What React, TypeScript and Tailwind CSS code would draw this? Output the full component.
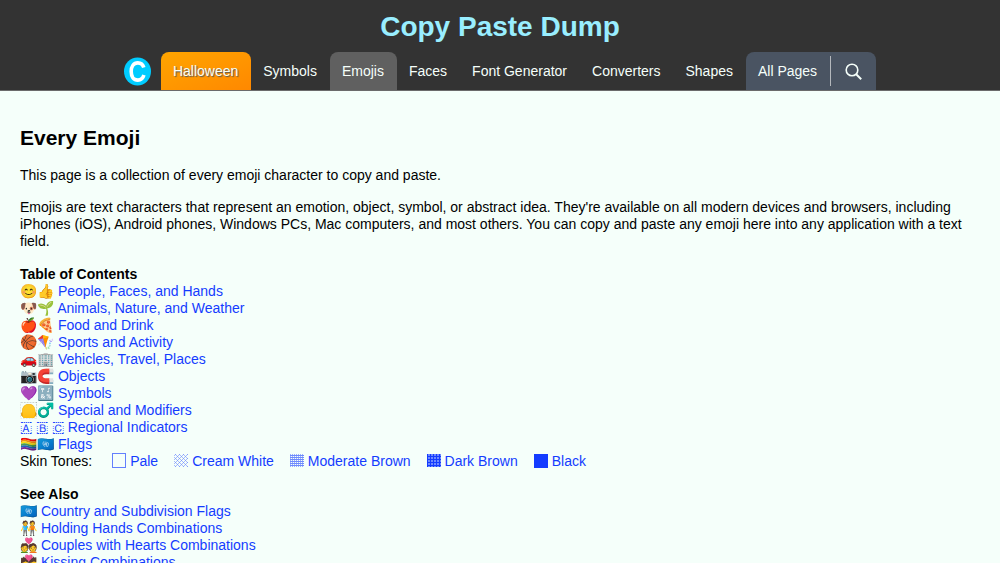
import { clsx } from "clsx";

const NAV_LINKS = [
  { label: "Symbols" },
  { label: "Emojis", active: true },
  { label: "Faces" },
  { label: "Font Generator" },
  { label: "Converters" },
  { label: "Shapes" },
];

const CONTENTS = [
  { icon: "😊👍", label: "People, Faces, and Hands" },
  { icon: "🐶🌱", label: "Animals, Nature, and Weather" },
  { icon: "🍎🍕", label: "Food and Drink" },
  { icon: "🏀🪁", label: "Sports and Activity" },
  { icon: "🚗🏢", label: "Vehicles, Travel, Places" },
  { icon: "📷🧲", label: "Objects" },
  { icon: "💜🔣", label: "Symbols" },
  { icon: "🦲♂️", label: "Special and Modifiers" },
  { icon: "🇦 🇧 🇨", label: "Regional Indicators" },
  { icon: "🏳️‍🌈🇺🇳", label: "Flags" },
];

const SKIN_TONES = [
  { id: "pale", label: "Pale" },
  { id: "cream", label: "Cream White" },
  { id: "moderate", label: "Moderate Brown" },
  { id: "dark", label: "Dark Brown" },
  { id: "black", label: "Black" },
];

const SEE_ALSO = [
  { icon: "🇺🇳", label: "Country and Subdivision Flags" },
  { icon: "🧑‍🤝‍🧑", label: "Holding Hands Combinations" },
  { icon: "💑", label: "Couples with Hearts Combinations" },
  { icon: "💏", label: "Kissing Combinations" },
];

function Logo() {
  return (
    <a href="#" aria-label="Home" className="mr-2.5 mb-1">
      <svg width="27" height="29" viewBox="0 0 27 29">
        <ellipse cx="13.5" cy="14.5" rx="13.5" ry="14" fill="#00ccff" />
        <path
          d="M19.8 10.6C18.9 7.4 16.7 5.9 13.8 5.9C9.6 5.9 7.2 9.3 7.2 14.6C7.2 19.9 9.6 23.1 13.8 23.1C16.9 23.1 19 21.4 19.9 18"
          fill="none"
          stroke="#fff"
          strokeWidth="3.6"
        />
      </svg>
    </a>
  );
}

function Swatch({ tone }: { tone: string }) {
  return (
    <svg width="14" height="15" viewBox="0 0 14 15" className="mr-1" shapeRendering="crispEdges">
      {tone === "pale" && (
        <rect x="0.5" y="0.5" width="13" height="14" fill="none" stroke="#143cff" strokeOpacity="0.65" />
      )}
      {tone === "cream" && (
        <>
          <pattern id="cream" width="4" height="4" patternUnits="userSpaceOnUse">
            <path d="M0 0h1v1h-1zM2 2h1v1h-1zM2 0h1v1h-1zM0 2h1v1h-1z" fill="#143cff" fillOpacity="0.35" />
            <path d="M1 1h1v1h-1zM3 3h1v1h-1z" fill="#143cff" fillOpacity="0.5" />
          </pattern>
          <rect y="1" width="14" height="13" fill="url(#cream)" />
        </>
      )}
      {tone === "moderate" && (
        <>
          <pattern id="moderate" width="2" height="2" patternUnits="userSpaceOnUse">
            <path d="M0 0h2v1h-2z" fill="#143cff" fillOpacity="0.6" />
            <path d="M0 1h1v1h-1z" fill="#143cff" fillOpacity="0.4" />
          </pattern>
          <rect y="1" width="14" height="13" fill="url(#moderate)" />
        </>
      )}
      {tone === "dark" && (
        <>
          <pattern id="dark" width="3" height="3" patternUnits="userSpaceOnUse">
            <path d="M0 0h3v3h-3z" fill="#143cff" fillOpacity="0.6" />
            <path d="M0 0h3v1h-3zM0 1h1v2h-1z" fill="#143cff" />
          </pattern>
          <rect y="1" width="14" height="13" fill="url(#dark)" />
        </>
      )}
      {tone === "black" && <rect y="1" width="14" height="14" fill="#143cff" />}
    </svg>
  );
}

function LinkList({ items }: { items: { icon: string; label: string }[] }) {
  return (
    <ul className="leading-[17px]">
      {items.map((item) => (
        <li key={item.label} className="h-[17px]">
          <a href="#" className="text-[#143cff]">
            {item.icon} {item.label}
          </a>
        </li>
      ))}
    </ul>
  );
}

export default function App() {
  return (
    <div className="h-screen overflow-hidden bg-[#f5fffa] font-['Liberation_Sans',sans-serif] text-[14px] leading-4 text-black">
      <header className="border-b border-[#6b6b6b] bg-[#333]">
        <div className="pt-2.5 pb-2 text-center text-[28px] leading-[34px] font-bold text-[#99eeff]">
          Copy Paste Dump
        </div>
        <nav className="flex items-end justify-center text-[#f5fffa]">
          <Logo />
          <a
            href="#"
            className="flex h-[38px] items-center rounded-t-lg bg-linear-to-br from-[#ffa500] to-[#ff8800] pr-[13px] pl-3 [text-shadow:1px_1px_1px_#555]"
          >
            Halloween
          </a>
          {NAV_LINKS.map((link) => (
            <a
              key={link.label}
              href="#"
              className={clsx(
                "flex h-[38px] items-center rounded-t-lg pr-[13px] pl-3",
                link.active && "bg-[#606060]",
              )}
            >
              {link.label}
            </a>
          ))}
          <div className="flex h-[38px] items-center rounded-t-lg bg-[#4a5462]">
            <a href="#" className="pr-[13px] pl-3">
              All Pages
            </a>
            <button
              type="button"
              aria-label="Search"
              className="flex h-[30px] items-center border-l border-[#b4b8bc] px-3.5"
            >
              <svg width="17" height="17" viewBox="0 0 17 17" fill="none" stroke="#f5fffa" strokeWidth="1.6">
                <circle cx="7" cy="7" r="5.8" />
                <path d="M11.2 11.2L16.2 16.2" strokeWidth="2" />
              </svg>
            </button>
          </div>
        </nav>
      </header>

      <main className="px-5 pt-[34px]">
        <h1 className="text-[21px] leading-[26px] font-bold">Every Emoji</h1>
        <p className="mt-4">This page is a collection of every emoji character to copy and paste.</p>
        <p className="mt-4 leading-[17px]">
          Emojis are text characters that represent an emotion, object, symbol, or abstract idea.
          They're available on all modern devices and browsers, including iPhones (iOS), Android
          phones, Windows PCs, Mac computers, and most others. You can copy and paste any emoji here
          into any application with a text field.
        </p>

        <h2 className="mt-4 leading-[17px] font-bold">Table of Contents</h2>
        <LinkList items={CONTENTS} />
        <div className="flex">
          <span className="mr-5">Skin Tones:</span>
          <div className="flex gap-4">
            {SKIN_TONES.map((tone) => (
              <a key={tone.id} href="#" className="flex text-[#143cff]">
                <Swatch tone={tone.id} />
                {tone.label}
              </a>
            ))}
          </div>
        </div>

        <h2 className="mt-[17px] leading-[17px] font-bold">See Also</h2>
        <LinkList items={SEE_ALSO} />
      </main>
    </div>
  );
}
